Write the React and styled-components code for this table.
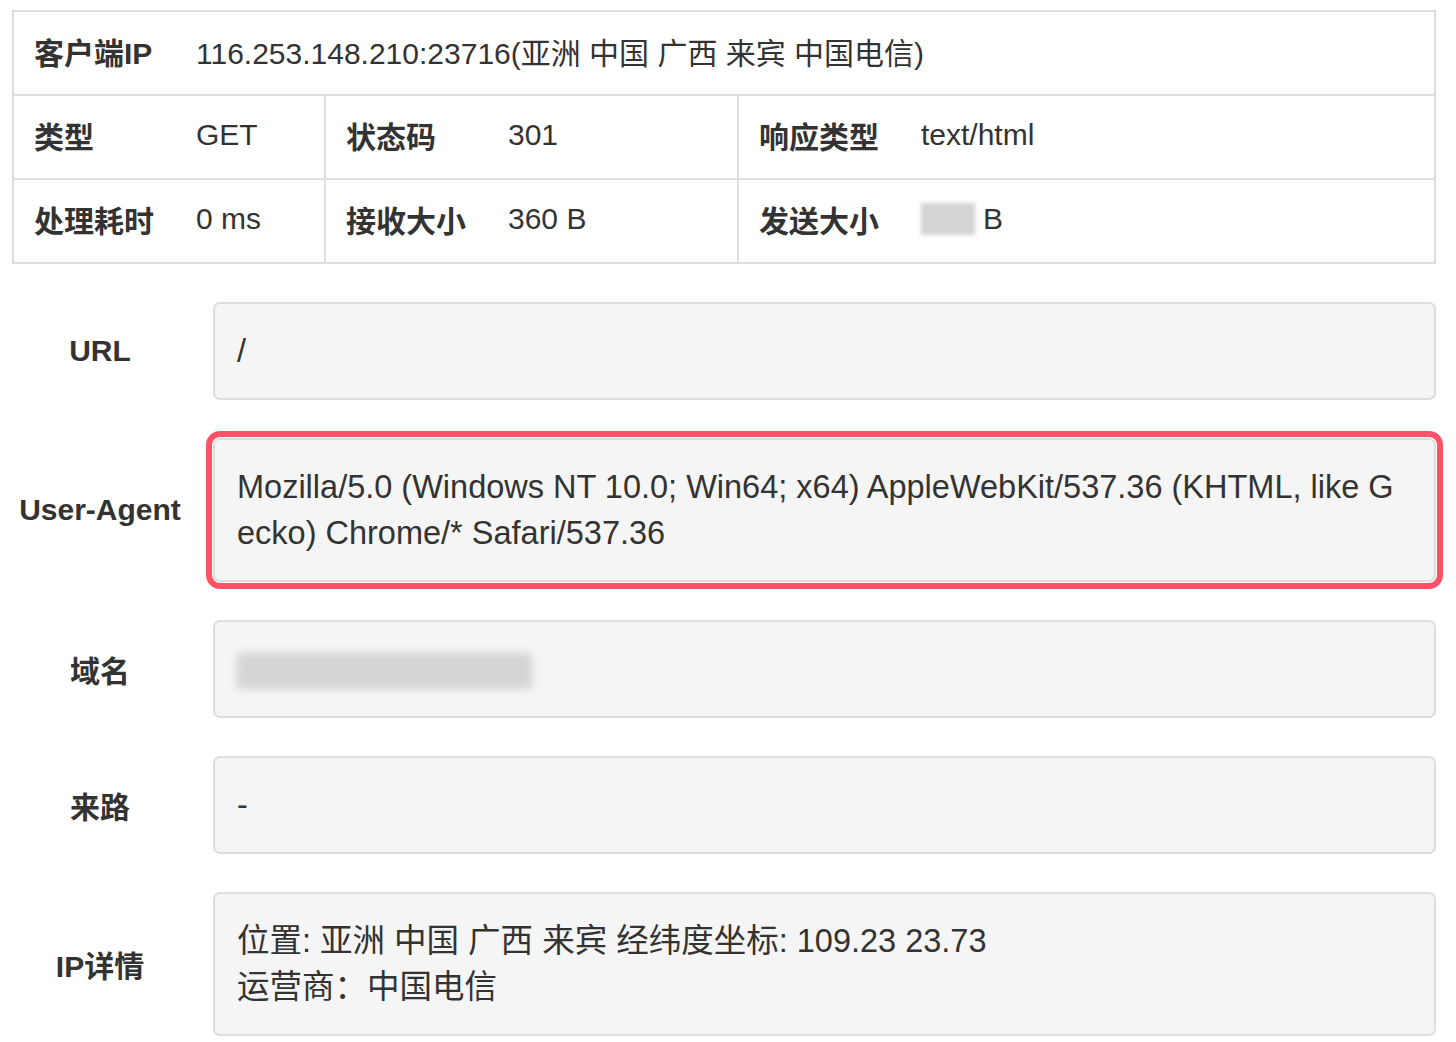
// --- IMPORTS

import * as React from 'react';
import styled, { createGlobalStyle } from 'styled-components';

// --- STYLES

const GlobalStyle = createGlobalStyle`
	html, body {
		margin: 0;
		padding: 0;
		background: #fff;
	}
	body {
		font-family: "Liberation Sans", Arial, "Noto Sans CJK SC", sans-serif;
		color: #333;
		font-size: 30px;
	}
`;

const Page = styled.div`
	padding: 10px 20px 10px 0;
`;

const InfoTable = styled.div`
	display: grid;
	grid-template-columns: 312px 413px 1fr;
	margin-left: 12px;
	border-top: 2px solid #ddd;
	border-left: 2px solid #ddd;
`;

const Cell = styled.div`
	display: flex;
	align-items: center;
	height: 82px;
	padding-left: 20px;
	border-right: 2px solid #ddd;
	border-bottom: 2px solid #ddd;
	grid-column: ${props => (props.full ? '1 / -1' : 'auto')};
`;

const CellLabel = styled.span`
	flex: 0 0 162px;
	font-weight: bold;
	margin-top: -4px;
`;

const CellValue = styled.span`
	display: flex;
	align-items: center;
	white-space: nowrap;
	margin-top: -4px;
`;

const Blurred = styled.span`
	display: inline-block;
	vertical-align: middle;
	width: ${props => props.w}px;
	height: ${props => props.h}px;
	margin-right: ${props => props.gap || 0}px;
	background: #d4d4d4;
	filter: blur(${props => props.blur || 3}px);
`;

const Form = styled.div`
	display: flex;
	flex-direction: column;
	gap: 38px;
	margin-top: 38px;
`;

const FormRow = styled.div`
	display: grid;
	grid-template-columns: 200px 1fr;
	column-gap: 13px;
	align-items: center;
`;

const FormLabel = styled.div`
	text-align: center;
	font-weight: bold;
	font-size: 30px;
`;

const FormBox = styled.div`
	box-sizing: border-box;
	min-height: 96px;
	padding: 24px 38px 24px 22px;
	background: #f5f5f5;
	border: 2px solid #ddd;
	border-radius: 7px;
	font-size: 32.5px;
	line-height: 46px;
	word-break: break-all;
	outline: ${props => (props.highlight ? '6px solid #fd5267' : 'none')};
	outline-offset: 1px;
`;

// --- COMPONENT

export default function App() {
	return (
		<Page>
			<GlobalStyle />
			<InfoTable>
				<Cell full>
					<CellLabel>客户端IP</CellLabel>
					<CellValue>116.253.148.210:23716(亚洲 中国 广西 来宾 中国电信)</CellValue>
				</Cell>
				<Cell>
					<CellLabel>类型</CellLabel>
					<CellValue>GET</CellValue>
				</Cell>
				<Cell>
					<CellLabel>状态码</CellLabel>
					<CellValue>301</CellValue>
				</Cell>
				<Cell>
					<CellLabel>响应类型</CellLabel>
					<CellValue>text/html</CellValue>
				</Cell>
				<Cell>
					<CellLabel>处理耗时</CellLabel>
					<CellValue>0 ms</CellValue>
				</Cell>
				<Cell>
					<CellLabel>接收大小</CellLabel>
					<CellValue>360 B</CellValue>
				</Cell>
				<Cell>
					<CellLabel>发送大小</CellLabel>
					<CellValue>
						<Blurred w={54} h={32} gap={8} blur={2} />
						B
					</CellValue>
				</Cell>
			</InfoTable>

			<Form>
				<FormRow>
					<FormLabel>URL</FormLabel>
					<FormBox>/</FormBox>
				</FormRow>
				<FormRow>
					<FormLabel>User-Agent</FormLabel>
					<FormBox highlight>
						Mozilla/5.0 (Windows NT 10.0; Win64; x64) AppleWebKit/537.36 (KHTML, like Gecko) Chrome/* Safari/537.36
					</FormBox>
				</FormRow>
				<FormRow>
					<FormLabel>域名</FormLabel>
					<FormBox>
						<Blurred w={295} h={36} blur={4} />
					</FormBox>
				</FormRow>
				<FormRow>
					<FormLabel>来路</FormLabel>
					<FormBox>-</FormBox>
				</FormRow>
				<FormRow>
					<FormLabel>IP详情</FormLabel>
					<FormBox>
						位置: 亚洲 中国 广西 来宾 经纬度坐标: 109.23 23.73
						<br />
						运营商：中国电信
					</FormBox>
				</FormRow>
			</Form>
		</Page>
	);
}
